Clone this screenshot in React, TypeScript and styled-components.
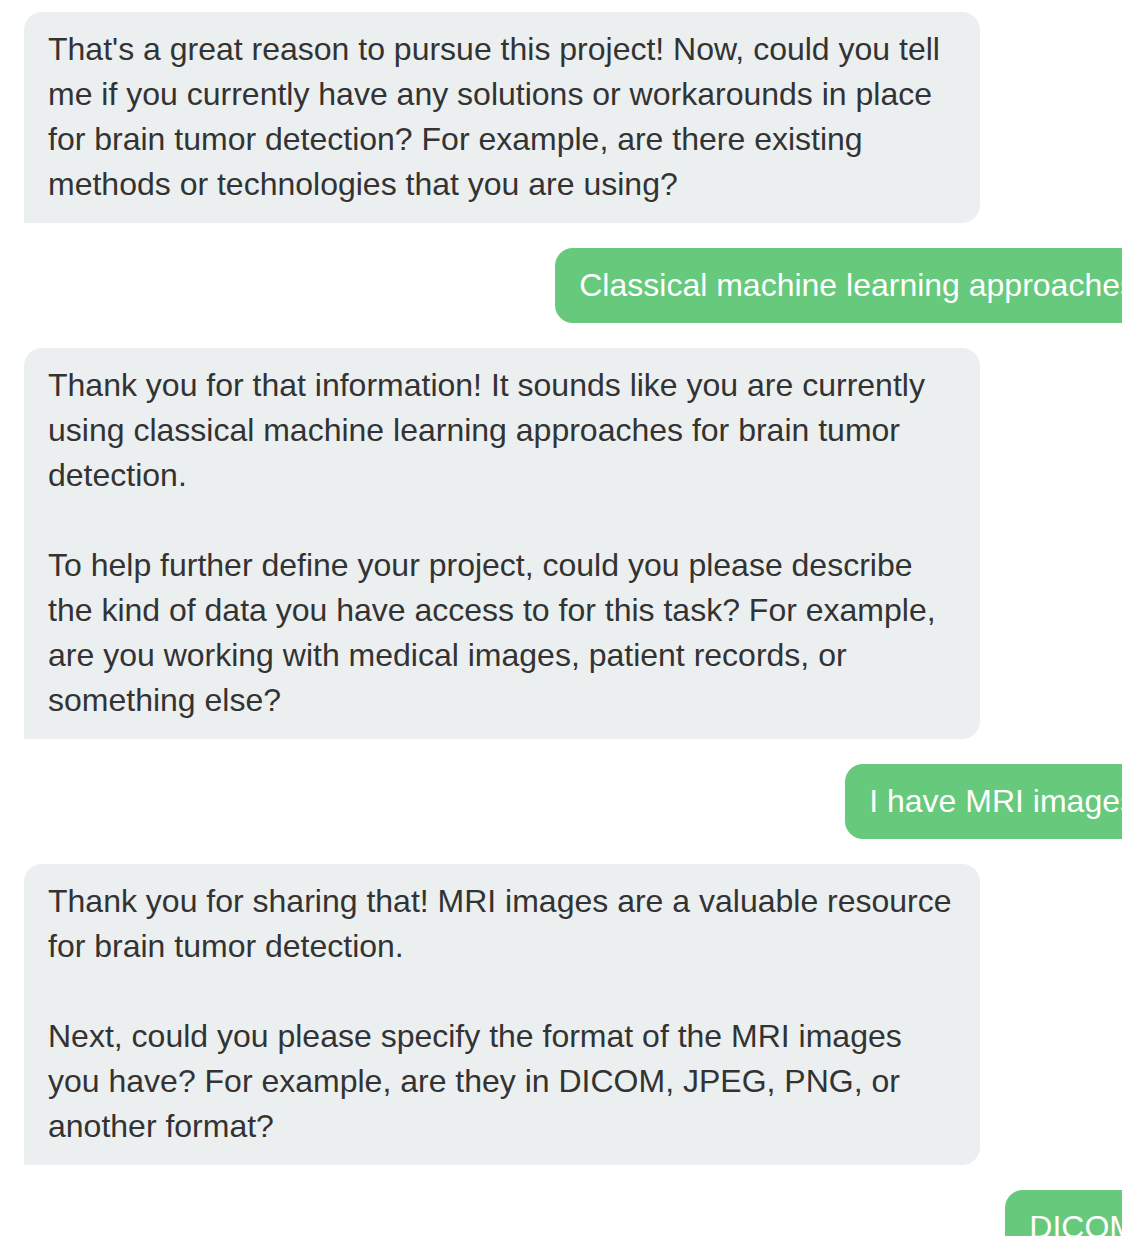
import React from 'react'
import styled, { createGlobalStyle } from 'styled-components'

const GlobalStyle = createGlobalStyle`
  html, body {
    margin: 0;
    padding: 0;
    background: #fff;
    overflow: hidden;
  }
  body {
    font-family: "Liberation Sans", Arial, Helvetica, sans-serif;
  }
`

interface IMessage {
  from: 'bot' | 'user'
  text: string
}

const messages: IMessage[] = [
  {
    from: 'bot',
    text: "That's a great reason to pursue this project! Now, could you tell\nme if you currently have any solutions or workarounds in place\nfor brain tumor detection? For example, are there existing\nmethods or technologies that you are using?",
  },
  { from: 'user', text: 'Classical machine learning approaches' },
  {
    from: 'bot',
    text: 'Thank you for that information! It sounds like you are currently\nusing classical machine learning approaches for brain tumor\ndetection.\n\nTo help further define your project, could you please describe\nthe kind of data you have access to for this task? For example,\nare you working with medical images, patient records, or\nsomething else?',
  },
  { from: 'user', text: 'I have MRI images' },
  {
    from: 'bot',
    text: 'Thank you for sharing that! MRI images are a valuable resource\nfor brain tumor detection.\n\nNext, could you please specify the format of the MRI images\nyou have? For example, are they in DICOM, JPEG, PNG, or\nanother format?',
  },
  { from: 'user', text: 'DICOM' },
]

// the list is a little wider than the window, so user bubbles run off the right edge
const Chat = styled.div`
  display: flex;
  flex-direction: column;
  gap: 25px;
  width: 1160px;
  padding: 12px 0 40px 24px;
  box-sizing: border-box;
`

const Bubble = styled.div<{ $user?: boolean }>`
  box-sizing: border-box;
  padding: 15px 24px 15.5px;
  font-size: 32px;
  line-height: 45px;
  white-space: pre-line;
  ${p => p.$user ? `
    align-self: flex-end;
    background: #66c97b;
    color: #fff;
    white-space: nowrap;
    border-radius: 18px 0 0 18px;
  ` : `
    align-self: flex-start;
    width: 956px;
    background: #ebeff0;
    color: #333;
    border-radius: 18px 18px 18px 0;
  `}
`

const App = () => {
  return <>
    <GlobalStyle />
    <Chat>
      {messages.map((m, i) => (
        <Bubble key={i} $user={m.from === 'user'}>{m.text}</Bubble>
      ))}
    </Chat>
  </>
}

export default App
